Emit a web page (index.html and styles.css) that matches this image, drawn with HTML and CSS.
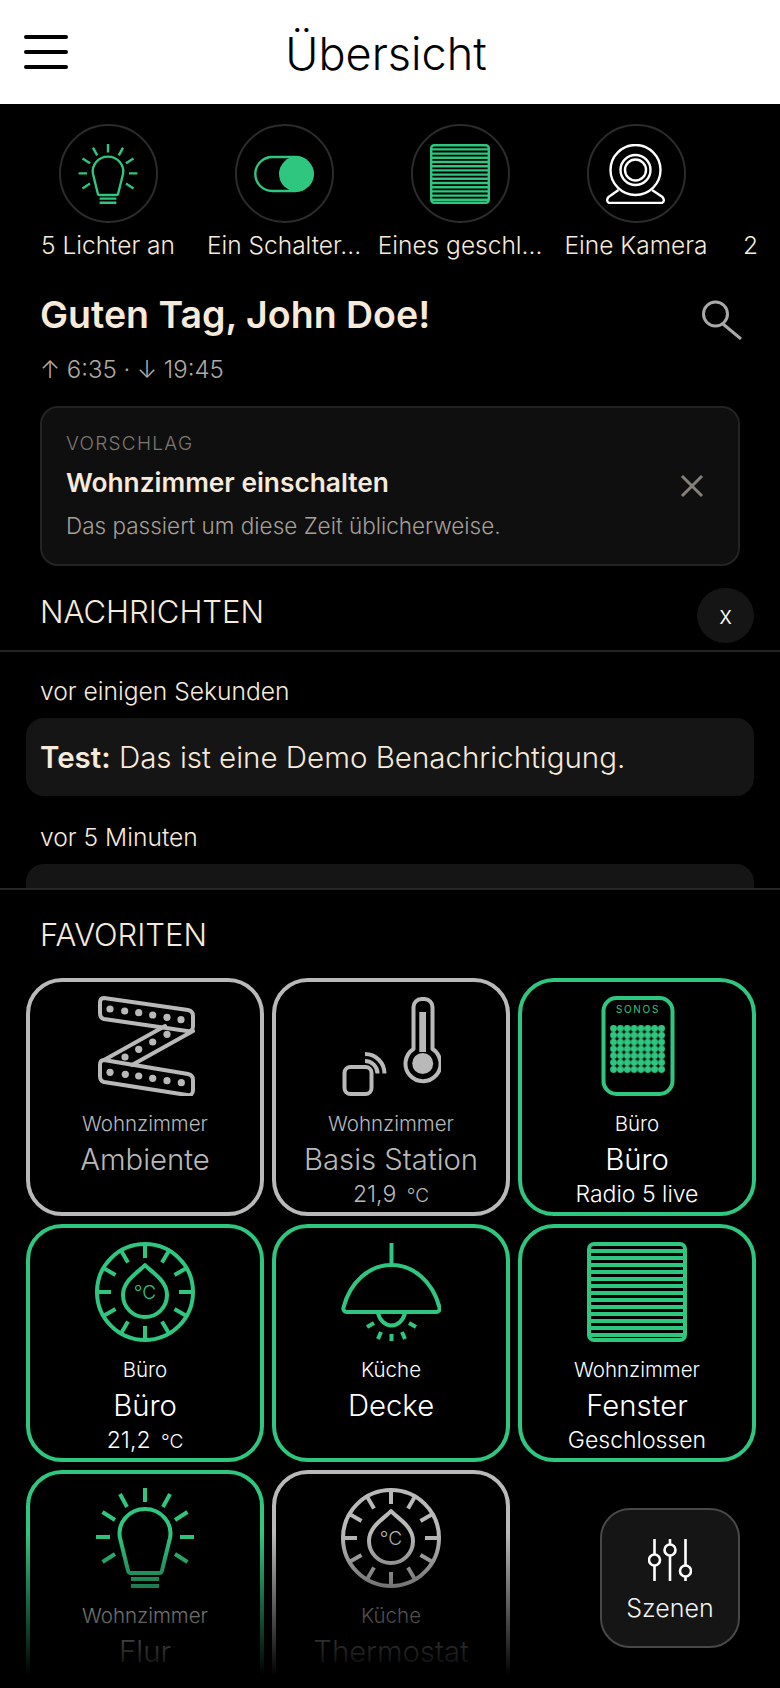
FILE: index.html
```html
<!DOCTYPE html>
<html lang="de">
<head>
    <meta charset="UTF-8">
    <meta name="viewport" content="width=device-width, initial-scale=1.0">
    <title>Übersicht</title>
    <link rel="stylesheet" href="styles.css">
</head>
<body>

    <!-- Icons, die mehrfach vorkommen -->
    <svg class="icon-defs" aria-hidden="true">
        <symbol id="i-bulb" viewBox="0 0 100 100">
            <path class="line" d="M36 85H64a3 3 0 0 0 3-2.500L75 50C78 35 66 21 50 21S22 35 25 50L33 82.500a3 3 0 0 0 3 2.500Z"/>
            <path class="line butt" d="M36 91H64M36 98H64M50 0V14M25 6L32 19M75 6L68 19M7.500 24L20 32M92.500 24L80 32M1 49H15M85 49H99M7.500 74L20 66M92.500 74L80 66"/>
        </symbol>
        <symbol id="i-blinds" viewBox="0 0 100 100">
            <rect class="line" x="2" y="2" width="96" height="96" rx="5"/>
            <path class="line butt" d="M2 9H98M2 16H98M2 23H98M2 30H98M2 37H98M2 44H98M2 51H98M2 58H98M2 65H98M2 72H98M2 79H98M2 86H98M2 93H98"/>
        </symbol>
        <symbol id="i-thermostat" viewBox="0 0 100 100">
            <circle class="line" cx="50" cy="50" r="48"/>
            <path class="line butt" d="M50 2V16M50 84V98M2 50H16M84 50H98M26 8.400L33 20.500M74 8.400L67 20.500M26 91.600L33 79.500M74 91.600L67 79.500M8.400 26L20.500 33M91.600 26L79.500 33M8.400 74L20.500 67M91.600 74L79.500 67"/>
            <path class="line" d="M50 23C56 30 72 38 72 53A22 22 0 0 1 28 53C28 38 44 30 50 23Z"/>
        </symbol>
    </svg>

    <header class="topbar">
        <div class="burger"><span></span><span></span><span></span></div>
        <div class="topbar-title">Übersicht</div>
    </header>

    <!-- Statusleiste -->
    <div class="status-strip">
        <div class="status-item">
            <div class="status-circle green"><svg class="icon-60"><use href="#i-bulb"/></svg></div>
            <div class="status-label">5 Lichter an</div>
        </div>
        <div class="status-item">
            <div class="status-circle green">
                <svg class="icon-60" viewBox="0 0 60 60">
                    <rect class="line-thin" x="1.300" y="13" width="57" height="34" rx="17"/>
                    <circle class="fill" cx="42.500" cy="30" r="17.500"/>
                </svg>
            </div>
            <div class="status-label">Ein Schalter...</div>
        </div>
        <div class="status-item">
            <div class="status-circle green"><svg class="icon-60"><use href="#i-blinds"/></svg></div>
            <div class="status-label">Eines geschl...</div>
        </div>
        <div class="status-item">
            <div class="status-circle white">
                <svg class="icon-60" viewBox="0 0 60 60">
                    <circle class="line-thin" cx="29.500" cy="26" r="25"/>
                    <circle class="line-thin" cx="29.500" cy="26" r="15"/>
                    <circle class="line-thin" cx="29.500" cy="26" r="10.500"/>
                    <path class="line-thin" d="M12.500 46L2.500 53Q-.5 57 3 59H56Q59.500 57 56.500 53L46 46"/>
                </svg>
            </div>
            <div class="status-label">Eine Kamera</div>
        </div>
        <div class="status-item status-more">
            <div class="status-circle-empty"></div>
            <div class="status-label">2</div>
        </div>
    </div>

    <div class="greeting">
        <h1>Guten Tag, John Doe!</h1>
        <svg class="search" viewBox="0 0 40 40">
            <circle cx="13.500" cy="14" r="12"/>
            <path d="M21 24L39 39"/>
        </svg>
    </div>
    <div class="sun">↑ 6:35 · ↓ 19:45</div>

    <div class="suggestion">
        <div class="suggestion-text">
            <div class="suggestion-tag">VORSCHLAG</div>
            <div class="suggestion-title">Wohnzimmer einschalten</div>
            <div class="suggestion-sub">Das passiert um diese Zeit üblicherweise.</div>
        </div>
        <svg class="suggestion-close" viewBox="0 0 24 24"><path d="M2 2L22 22M22 2L2 22"/></svg>
    </div>

    <div class="section-head">
        <h2>NACHRICHTEN</h2>
        <div class="close-round">x</div>
    </div>

    <div class="messages">
        <div class="msg-time">vor einigen Sekunden</div>
        <div class="msg"><b>Test:</b> Das ist eine Demo Benachrichtigung.</div>
        <div class="msg-time">vor 5 Minuten</div>
        <div class="msg"></div>
    </div>

    <h2 class="fav-title">FAVORITEN</h2>

    <div class="tiles">
        <div class="tile off">
            <svg class="icon-100" viewBox="0 0 100 100">
                <path class="line" d="M9 2L93 14Q98 15 98 20V30Q98 36 92 35L9 23Q5 22 5 17V7Q5 2 9 2Z"/>
                <path class="line" d="M70 30L9 64M98 35L37 69"/>
                <path class="line" d="M9 64L93 78Q98 79 98 84V94Q98 100 92 99L9 86Q5 85 5 80V69Q5 64 9 64Z"/>
                <g class="fill">
                    <circle cx="15" cy="13" r="3.600"/><circle cx="29.700" cy="15" r="3.600"/><circle cx="43.700" cy="16.700" r="3.600"/><circle cx="57.700" cy="19" r="3.600"/><circle cx="72" cy="21.300" r="3.600"/><circle cx="86" cy="23.700" r="3.600"/>
                    <circle cx="72" cy="38.300" r="3.600"/><circle cx="57.700" cy="46" r="3.600"/><circle cx="43.700" cy="53.300" r="3.600"/><circle cx="30" cy="61" r="3.600"/>
                    <circle cx="15" cy="76.300" r="3.600"/><circle cx="30.300" cy="78.300" r="3.600"/><circle cx="43.700" cy="80" r="3.600"/><circle cx="57.700" cy="82.300" r="3.600"/><circle cx="72" cy="84.700" r="3.600"/><circle cx="86.300" cy="86.700" r="3.600"/>
                </g>
            </svg>
            <div class="tile-room">Wohnzimmer</div>
            <div class="tile-name">Ambiente</div>
        </div>
        <div class="tile off">
            <svg class="icon-100" viewBox="0 0 100 100">
                <path class="line" d="M72.500 53V11a8 8 0 0 1 8-8h3a8 8 0 0 1 8 8V53A17.500 17.500 0 1 1 72.500 53Z"/>
                <rect class="fill" x="78.300" y="16" width="6.700" height="40"/>
                <circle class="fill" cx="81.700" cy="67.500" r="10.500"/>
                <rect class="line" x="3.500" y="71" width="27" height="27" rx="6"/>
                <path class="line butt" d="M24 58A19.500 19.500 0 0 1 43.500 77.500M24 65A12.500 12.500 0 0 1 36.500 77.500"/>
            </svg>
            <div class="tile-room">Wohnzimmer</div>
            <div class="tile-name">Basis Station</div>
            <div class="tile-status">21,9 <small>°C</small></div>
        </div>
        <div class="tile on">
            <svg class="icon-100" viewBox="0 0 100 100">
                <defs>
                    <pattern id="sonos-dots" x="23.100" y="29" width="6.860" height="6.840" patternUnits="userSpaceOnUse">
                        <circle class="fill" cx="3.430" cy="3.420" r="3.400"/>
                    </pattern>
                </defs>
                <rect class="line" x="16.500" y="2" width="69" height="96" rx="13"/>
                <text class="icon-text" x="51" y="16.500" font-size="10" letter-spacing="1.700">SONOS</text>
                <rect x="23.100" y="29" width="54.900" height="47.900" fill="url(#sonos-dots)"/>
            </svg>
            <div class="tile-room">Büro</div>
            <div class="tile-name">Büro</div>
            <div class="tile-status">Radio 5 live</div>
        </div>
        <div class="tile on">
            <svg class="icon-100" viewBox="0 0 100 100">
                <use href="#i-thermostat"/>
                <text class="icon-text light" x="50" y="57" font-size="19">°C</text>
            </svg>
            <div class="tile-room">Büro</div>
            <div class="tile-name">Büro</div>
            <div class="tile-status">21,2 <small>°C</small></div>
        </div>
        <div class="tile on">
            <svg class="icon-100" viewBox="0 0 100 100">
                <path class="line butt" d="M50.500 1V23"/>
                <path class="line" d="M6 70H95a3.500 3.500 0 0 0 3.500-4.500C92 40 73 23 50.500 23S9 40 2.500 65.500A3.500 3.500 0 0 0 6 70Z"/>
                <path class="line" d="M37 71a14 17 0 0 0 27 0"/>
                <path class="line butt" d="M26 85L33 81M37 97L40 90M50.500 92V99M61 90L64 97M68 81L75 85"/>
            </svg>
            <div class="tile-room">Küche</div>
            <div class="tile-name">Decke</div>
        </div>
        <div class="tile on">
            <svg class="icon-100"><use href="#i-blinds"/></svg>
            <div class="tile-room">Wohnzimmer</div>
            <div class="tile-name">Fenster</div>
            <div class="tile-status">Geschlossen</div>
        </div>
        <div class="tile on">
            <svg class="icon-100"><use href="#i-bulb"/></svg>
            <div class="tile-room">Wohnzimmer</div>
            <div class="tile-name">Flur</div>
        </div>
        <div class="tile off">
            <svg class="icon-100" viewBox="0 0 100 100">
                <use href="#i-thermostat"/>
                <text class="icon-text light" x="50" y="57" font-size="19">°C</text>
            </svg>
            <div class="tile-room">Küche</div>
            <div class="tile-name">Thermostat</div>
            <div class="tile-status">22,8 <small>°C</small></div>
        </div>
    </div>

    <div class="fade"></div>

    <div class="scenes">
        <svg class="scenes-icon" viewBox="0 0 44 44">
            <path d="M6.500 1V43M22 1V43M37.500 1V43"/>
            <circle cx="6.500" cy="22" r="5.500"/>
            <circle cx="22" cy="12" r="5.500"/>
            <circle cx="37.500" cy="33" r="5.500"/>
        </svg>
        <div class="scenes-label">Szenen</div>
    </div>

</body>
</html>
```

FILE: styles.css
```css
* { margin: 0; padding: 0; box-sizing: border-box; font-family: Inter, "Noto Sans", sans-serif; }
html, body { height: 1688px; }
body { position: relative; width: 780px; background: #000; color: #f6eadb; overflow: hidden; font-weight: 300; }

/* SVG Grundformen */
.icon-defs { position: absolute; width: 0; height: 0; }
.line { fill: none; stroke: currentColor; stroke-width: 4; stroke-linejoin: round; stroke-linecap: round; }
.line.butt { stroke-linecap: butt; }
.line-thin { fill: none; stroke: currentColor; stroke-width: 2.4; stroke-linejoin: round; }
.fill { fill: currentColor; }
.icon-text { fill: currentColor; stroke: none; text-anchor: middle; font-family: Inter, sans-serif; font-weight: 400; }
.icon-text.light { font-weight: 300; }
.icon-60 { display: block; width: 60px; height: 60px; }
.icon-100 { display: block; width: 100px; height: 100px; flex: none; }

/* Kopfzeile */
.topbar { height: 104px; background: #fff; color: #000; display: flex; align-items: center; padding-left: 24px; position: relative; }
.burger { width: 44px; display: flex; flex-direction: column; gap: 11px; }
.burger span { display: block; height: 4px; background: #000; border-radius: 2px; }
.topbar-title { flex: 1; text-align: center; font-size: 45px; font-weight: 300; color: #000; padding: 4px 76px 0 0; line-height: 100px; }

/* Statusleiste */
.status-strip { display: flex; padding: 20px 0 0 20px; width: 780px; overflow: hidden; }
.status-item { flex: none; width: 176px; display: flex; flex-direction: column; align-items: center; }
.status-circle, .status-circle-empty { width: 99px; height: 99px; display: flex; align-items: center; justify-content: center; }
.status-circle { border: 2px solid #2b2b2b; border-radius: 50%; }
.status-circle.green { color: #2fc780; }
.status-circle.white { color: #fff; }
.status-label { margin-top: 7px; font-size: 24.500px; line-height: 30px; white-space: nowrap; }
.status-more { align-items: flex-start; padding-left: 19px; }

/* Begrüßung */
.greeting { display: flex; justify-content: space-between; align-items: flex-start; margin-top: 32px; padding: 0 38px 0 40px; }
.greeting h1 { font-size: 37.500px; line-height: 46px; font-weight: 600; }
.search { width: 40px; height: 40px; margin-top: 8px; fill: none; stroke: #a9a9a9; stroke-width: 3; }
.sun { margin: 15px 0 0 40px; font-size: 24px; line-height: 30px; color: #b0aba3; }

/* Vorschlag */
.suggestion { display: flex; align-items: center; justify-content: space-between; height: 160px; margin: 21px 40px 0; padding: 0 34px 0 24px; background: #0f0f0f; border: 2px solid #232323; border-radius: 18px; }
.suggestion-tag { font-size: 19px; line-height: 24px; letter-spacing: 1.300px; color: #7d7871; }
.suggestion-title { margin-top: 11px; font-size: 26.300px; line-height: 32px; font-weight: 600; }
.suggestion-sub { margin-top: 13px; font-size: 22.500px; line-height: 28px; color: #a5a098; }
.suggestion-close { width: 24px; height: 24px; flex: none; fill: none; stroke: #85817a; stroke-width: 3; }

/* Nachrichten */
.section-head { display: flex; justify-content: space-between; height: 86px; padding: 22px 26px 0 40px; border-bottom: 2px solid #262626; }
h2 { font-size: 31px; line-height: 36px; font-weight: 300; }
.section-head h2 { margin-top: 6px; }
.close-round { width: 57px; height: 55px; border-radius: 50%; background: #151515; color: #fff; font-size: 24px; display: flex; align-items: center; justify-content: center; }
.messages { height: 238px; overflow: hidden; border-bottom: 2px solid #262626; }
.msg-time { margin: 23px 0 10px 40px; font-size: 24.600px; line-height: 33px; }
.msg + .msg-time { margin-top: 25px; }
.msg { height: 78px; margin: 0 26px; padding-left: 14px; background: #151515; border-radius: 18px; font-size: 29.500px; line-height: 78px; white-space: nowrap; }
.msg b { font-weight: 600; }

/* Favoriten */
.fav-title { margin: 27px 0 0 40px; }
.tiles { display: grid; grid-template-columns: repeat(3, 238px); grid-auto-rows: 238px; gap: 8px; margin: 25px 0 0 26px; }
.tile { display: flex; flex-direction: column; align-items: center; padding-top: 14px; border: 4px solid; border-radius: 36px; text-align: center; white-space: nowrap; }
.tile.on { border-color: #2fc780; color: #2fc780; }
.tile.off { border-color: #b9b9b9; color: #b9b9b9; }
.tile-room, .tile-name, .tile-status { color: #fff; }
.tile.off .tile-room, .tile.off .tile-name, .tile.off .tile-status { color: #b9b9b9; }
.tile-room { margin-top: 15px; font-size: 20.500px; line-height: 26px; }
.tile-name { margin-top: 5px; font-size: 29.300px; line-height: 36px; }
.tile-status { margin-top: 2px; font-size: 23px; line-height: 28px; }
.tile-status small { margin-left: 4px; font-size: 19px; }

/* Abdunkelung unten und Szenen-Knopf */
.fade { position: absolute; left: 0; right: 0; bottom: 0; height: 155px; background: linear-gradient(to bottom, rgba(0, 0, 0, 0), #000 92%); }
.scenes { position: absolute; right: 40px; bottom: 40px; width: 140px; height: 140px; display: flex; flex-direction: column; align-items: center; padding-top: 28px; background: #151515; border: 2px solid #484848; border-radius: 30px; }
.scenes-icon { width: 44px; height: 44px; fill: #151515; stroke: #fff; stroke-width: 2.6; }
.scenes-label { margin-top: 11px; font-size: 25px; line-height: 30px; color: #f2f2f2; }
```
